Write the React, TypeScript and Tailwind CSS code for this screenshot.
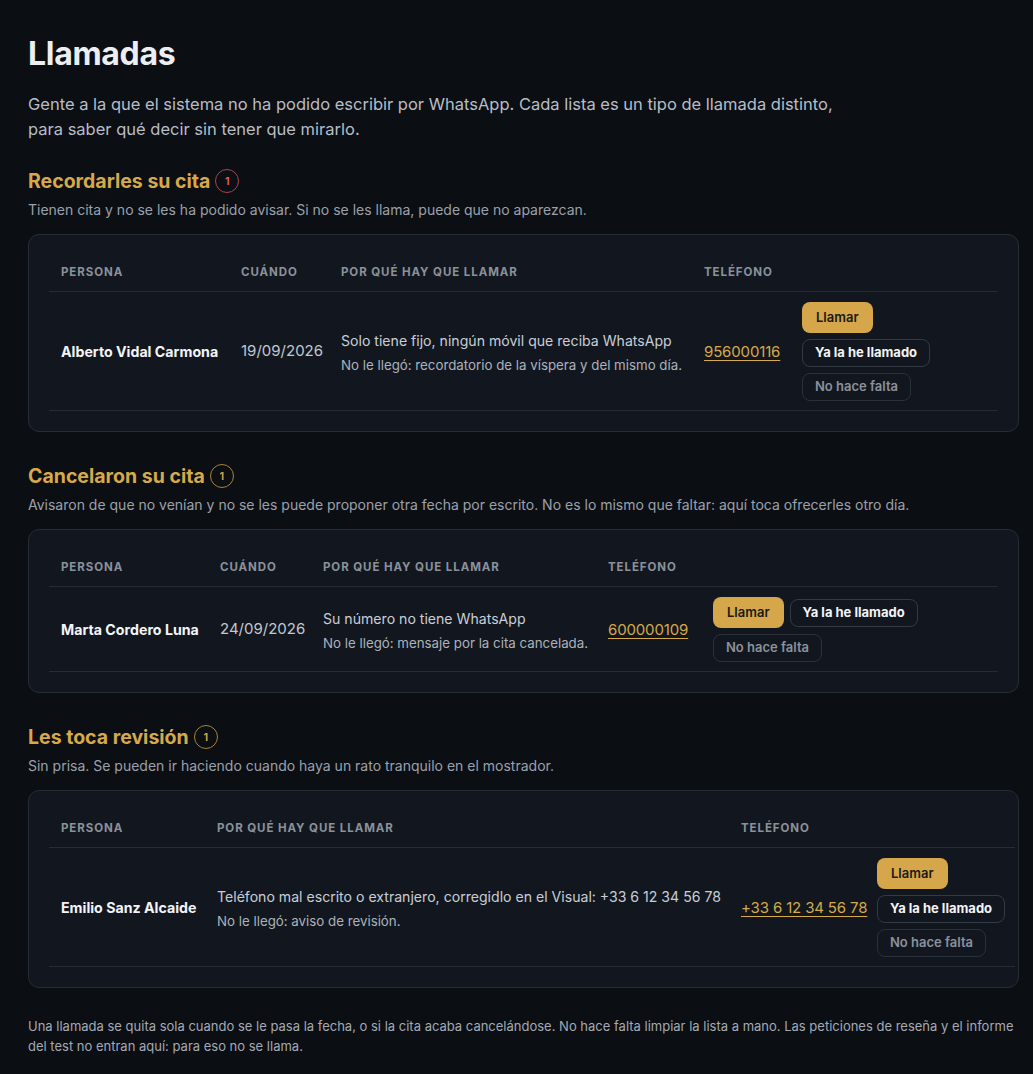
type Row = {
  name: string
  when?: string
  reason: string
  detail: string
  phone: string
}

type Section = {
  title: string
  badge: "red" | "gold"
  subtitle: string
  cols: string[]
  tableWidth: string
  rows: Row[]
}

const sections: Section[] = [
  {
    title: "Recordarles su cita",
    badge: "red",
    subtitle: "Tienen cita y no se les ha podido avisar. Si no se les llama, puede que no aparezcan.",
    cols: ["w-[180px]", "w-[100px]", "w-[363px]", "w-[98px]", "w-[208px]"],
    tableWidth: "w-[949px]",
    rows: [
      {
        name: "Alberto Vidal Carmona",
        when: "19/09/2026",
        reason: "Solo tiene fijo, ningún móvil que reciba WhatsApp",
        detail: "No le llegó: recordatorio de la víspera y del mismo día.",
        phone: "956000116",
      },
    ],
  },
  {
    title: "Cancelaron su cita",
    badge: "gold",
    subtitle:
      "Avisaron de que no venían y no se les puede proponer otra fecha por escrito. No es lo mismo que faltar: aquí toca ofrecerles otro día.",
    cols: ["w-[159px]", "w-[103px]", "w-[285px]", "w-[105px]", "w-[297px]"],
    tableWidth: "w-[949px]",
    rows: [
      {
        name: "Marta Cordero Luna",
        when: "24/09/2026",
        reason: "Su número no tiene WhatsApp",
        detail: "No le llegó: mensaje por la cita cancelada.",
        phone: "600000109",
      },
    ],
  },
  {
    title: "Les toca revisión",
    badge: "gold",
    subtitle: "Sin prisa. Se pueden ir haciendo cuando haya un rato tranquilo en el mostrador.",
    cols: ["w-[156px]", "w-[524px]", "w-[136px]", "w-[150px]"],
    tableWidth: "w-[966px]",
    rows: [
      {
        name: "Emilio Sanz Alcaide",
        reason: "Teléfono mal escrito o extranjero, corregidlo en el Visual: +33 6 12 34 56 78",
        detail: "No le llegó: aviso de revisión.",
        phone: "+33 6 12 34 56 78",
      },
    ],
  },
]

function Badge({ tone }: { tone: "red" | "gold" }) {
  return (
    <span
      className={`inline-flex size-6 items-center justify-center rounded-full border text-[11px] font-semibold ${
        tone === "red" ? "border-[#a8454c] text-[#e0676e]" : "border-[#a98536] text-[#d6a94a]"
      }`}
    >
      1
    </span>
  )
}

function Actions() {
  return (
    <div className="flex flex-wrap items-center gap-1.5">
      <button className="h-[31px] whitespace-nowrap rounded-lg bg-[#d5a64a] px-[14px] text-[13px] font-semibold text-[#1b1a17]">
        Llamar
      </button>
      <button className="h-[28px] whitespace-nowrap rounded-lg border border-[#333a44] px-3 text-[13px] font-bold text-[#f3f4f6]">
        Ya la he llamado
      </button>
      <button className="h-[28px] whitespace-nowrap rounded-lg border border-[#2a3039] px-3 text-[13px] font-semibold text-[#8b919b]">
        No hace falta
      </button>
    </div>
  )
}

function CallsTable({ section }: { section: Section }) {
  const hasWhen = section.cols.length === 5
  const th =
    "px-3 pt-[9px] pb-[11px] text-left text-[11.5px] leading-4 font-bold tracking-[0.08em] text-[#8b919b] whitespace-nowrap"
  const td = "px-3 pt-2.5 pb-[9px]"
  return (
    <div className="mt-3.5 rounded-[11px] border border-[#262c35] bg-[#12171f] p-5">
      <table className={`${section.tableWidth} table-fixed`}>
        <colgroup>
          {section.cols.map((c, i) => (
            <col key={i} className={c} />
          ))}
        </colgroup>
        <thead>
          <tr className="border-b border-[#262c35]">
            <th className={th}>PERSONA</th>
            {hasWhen && <th className={th}>CUÁNDO</th>}
            <th className={th}>POR QUÉ HAY QUE LLAMAR</th>
            <th className={th}>TELÉFONO</th>
            <th className="px-3" />
          </tr>
        </thead>
        <tbody>
          {section.rows.map((r) => (
            <tr key={r.name} className="border-b border-[#262c35]">
              <td className={`${td} whitespace-nowrap text-[14.2px] font-bold text-[#f2f4f7]`}>{r.name}</td>
              {hasWhen && <td className={`${td} whitespace-nowrap text-[15px] text-[#c3c8d0]`}>{r.when}</td>}
              <td className={`${td} whitespace-nowrap`}>
                <p className="text-[14.1px] leading-[22px] text-[#c9ced6]">{r.reason}</p>
                <p className="mt-1 text-[13.3px] leading-[18px] text-[#acb2bb]">{r.detail}</p>
              </td>
              <td className={`${td} whitespace-nowrap`}>
                <a href="#" className="text-[15px] tracking-[-0.01em] text-[#d6a94a] underline underline-offset-[3px]">
                  {r.phone}
                </a>
              </td>
              <td className={td}>
                <Actions />
              </td>
            </tr>
          ))}
        </tbody>
      </table>
    </div>
  )
}

function App() {
  return (
    <div
      className="min-h-screen bg-[#0b0e13] pt-[34px] pb-6 pl-7 pr-[14px] text-[#c3c8d0]"
      style={{ fontFamily: "Inter, 'Noto Sans', sans-serif" }}
    >
      <h1 className="text-[32px] leading-[40px] font-bold tracking-[-0.01em] text-[#eceef2]">Llamadas</h1>
      <p className="mt-[18px] max-w-[840px] text-[16.5px] leading-[25px] text-[#b8bdc6]">
        Gente a la que el sistema no ha podido escribir por WhatsApp. Cada lista es un tipo de llamada distinto,
        para saber qué decir sin tener que mirarlo.
      </p>

      {sections.map((s, i) => (
        <section key={s.title} className={i === 0 ? "mt-[25px]" : "mt-[30px]"}>
          <h2 className="flex items-center gap-[5px] text-[19.5px] leading-[28px] font-bold text-[#d6a94a]">
            {s.title}
            <Badge tone={s.badge} />
          </h2>
          <p className="mt-[5px] text-[14px] leading-[20px] text-[#9ba1ab]">{s.subtitle}</p>
          <CallsTable section={s} />
        </section>
      ))}

      <p className="mt-[29px] text-[13px] leading-[19.5px] text-[#a4aab3]">
        Una llamada se quita sola cuando se le pasa la fecha, o si la cita acaba cancelándose. No hace falta limpiar la
        lista a mano. Las peticiones de reseña y el informe del test no entran aquí: para eso no se llama.
      </p>
    </div>
  )
}

export default App
